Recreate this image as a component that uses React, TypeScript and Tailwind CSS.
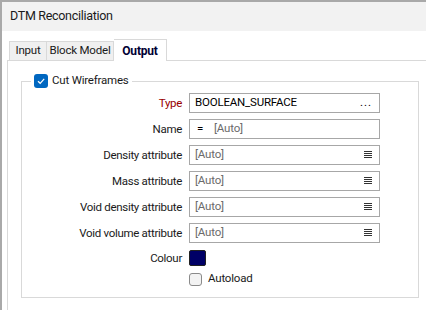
import React from "react";

const Lines = () => (
  <svg width="8" height="8" viewBox="0 0 8 8" className="shrink-0">
    <rect x="0" y="0" width="8" height="1" fill="#333" />
    <rect x="0" y="2" width="8" height="1" fill="#333" />
    <rect x="0" y="4" width="8" height="1" fill="#333" />
    <rect x="0" y="6" width="8" height="1" fill="#333" />
  </svg>
);

const Label = ({ children, red }: { children: React.ReactNode; red?: boolean }) => (
  <div className={`text-right text-[11.5px] tracking-[-0.3px] leading-[20px] ${red ? "text-[#980000]" : "text-[#1a1a1a]"}`}>{children}</div>
);

const Box = ({ children }: { children: React.ReactNode }) => (
  <div className="h-[20px] border border-[#a7a7a7] bg-white flex items-center pl-[5px] pr-[7px] text-[11.5px] tracking-[-0.2px] font-['Roboto',sans-serif]">
    {children}
  </div>
);

const AutoField = () => (
  <Box>
    <span className="flex-1 text-[#6b6b6b]">[Auto]</span>
    <Lines />
  </Box>
);

export default function App() {
  return (
    <div className="w-[426px] h-[310px] bg-white border-l-2 border-t-2 border-[#a9a9a9] font-['Roboto',sans-serif] text-[#1a1a1a] overflow-hidden flex flex-col">
      <div className="h-[29px] bg-[#f2f2f2] flex items-center pl-[8px] text-[12.5px] tracking-[-0.3px] shrink-0">DTM Reconciliation</div>
      <div className="flex-1 pl-[5px] pt-[7px] flex flex-col">
        <div className="flex items-end h-[22px] text-[11.5px] tracking-[-0.2px]">
          <div className="h-[19px] w-[38px] justify-center border border-b-0 border-[#d9d9d9] bg-[#f0f0f0] flex items-center ml-[2px]">Input</div>
          <div className="h-[19px] w-[67px] justify-center border border-b-0 border-l-0 border-[#d9d9d9] bg-[#f0f0f0] flex items-center">Block Model</div>
          <div className="h-[22px] w-[53px] justify-center border border-b-0 border-l-0 border-[#d9d9d9] bg-white flex items-center font-bold text-[12px] text-[#000033] relative top-[1px]">Output</div>
        </div>
        <div className="flex-1 border-l border-t border-[#d9d9d9] pl-[13px] pr-[7px] pt-[11px]">
          <fieldset className="border border-[#d9d9d9] h-[226px] px-0">
            <legend className="ml-[9px] px-[3px] flex items-center gap-[4px] text-[11.5px] tracking-[-0.2px] h-[18px]">
              <span className="w-[14px] h-[14px] rounded-[3px] bg-[#0067c0] flex items-center justify-center">
                <svg width="10" height="10" viewBox="0 0 10 10">
                  <path d="M2 5.2 L4.2 7.3 L8.2 2.8" stroke="white" strokeWidth="1.2" fill="none" />
                </svg>
              </span>
              <span>Cut Wireframes</span>
            </legend>
            <div className="grid grid-cols-[160px_191px] gap-x-[7px] gap-y-[6px] pt-[3px]">
              <Label red>Type</Label>
              <Box>
                <span className="flex-1 text-black">BOOLEAN_SURFACE</span>
                <span className="text-black tracking-[1px]">...</span>
              </Box>
              <Label>Name</Label>
              <Box>
                <span className="text-black w-[19px] pl-[2px]">=</span>
                <span className="flex-1 text-[#6b6b6b]">[Auto]</span>
              </Box>
              <Label>Density attribute</Label>
              <AutoField />
              <Label>Mass attribute</Label>
              <AutoField />
              <Label>Void density attribute</Label>
              <AutoField />
              <Label>Void volume attribute</Label>
              <AutoField />
              <div className="text-right text-[11.5px] tracking-[-0.3px] leading-[16px] h-[16px] mt-[1px]">Colour</div>
              <div className="flex items-start h-[16px] mt-[1px]">
                <div className="w-[17px] h-[16px] rounded-[2px] bg-[#000066] border border-[#222]" />
              </div>
              <div />
              <div className="flex items-center gap-[6px] h-[14px] text-[11.5px] tracking-[-0.2px]">
                <div className="w-[13px] h-[13px] rounded-[3px] border border-[#8a8a8a] bg-[#f3f3f3]" />
                <span>Autoload</span>
              </div>
            </div>
          </fieldset>
        </div>
      </div>
    </div>
  );
}
